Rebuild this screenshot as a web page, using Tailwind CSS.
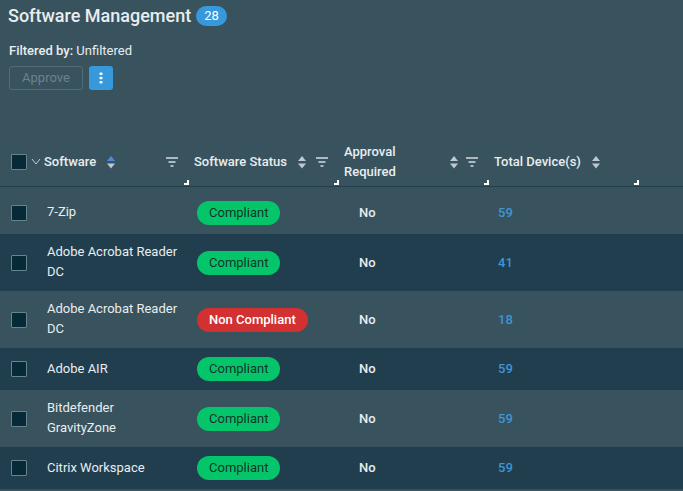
<!DOCTYPE html>
<html lang="en">
<head>
<meta charset="utf-8">
<meta name="viewport" content="width=device-width, initial-scale=1">
<title>Software Management</title>
<script src="https://cdn.jsdelivr.net/npm/@tailwindcss/browser@4"></script>
</head>
<body class="min-h-screen overflow-x-hidden overflow-y-hidden bg-[#38535e] font-[Roboto,sans-serif] text-[13px] leading-5 text-[#e8edef]">
<svg class="hidden" aria-hidden="true">
  <symbol id="sort" viewBox="0 0 8 14"><path class="fill-(--up)" d="M4 1 8 6H0Z"/><path fill="#bcc9d0" d="M0 8.500H8L4 13.500Z"/></symbol>
  <symbol id="filter" viewBox="0 0 12 10"><path fill="none" stroke="#d3dde1" stroke-width="1.500" d="M0 1h12M2.500 5h7M4.500 9h3"/></symbol>
</svg>
<header class="px-2 pt-1">
  <div class="flex items-center gap-[5px]">
    <h1 class="text-lg leading-6 font-medium">Software Management</h1>
    <span class="rounded-full bg-[#3798db] px-2 text-white">28</span>
  </div>
  <p class="mt-[13px] px-px"><span class="font-medium">Filtered by:</span> Unfiltered</p>
  <div class="mt-1 flex gap-1.5 px-px pt-px">
    <button type="button" disabled class="h-6 w-[74px] rounded-[3px] border border-[#536d78] text-[#6c828b]">Approve</button>
    <button type="button" aria-label="More actions" class="flex h-6 w-6 items-center justify-center rounded-[3px] bg-[#3798db]">
      <svg class="h-3 w-1" viewBox="0 0 4 12" fill="#fff"><rect x=".5" y=".5" width="3" height="2.500" rx=".8"/><rect x=".5" y="4.800" width="3" height="2.500" rx=".8"/><rect x=".5" y="9.100" width="3" height="2.500" rx=".8"/></svg>
    </button>
  </div>
</header>

<table class="mt-12 w-full table-fixed border-separate border-spacing-0 text-left">
  <colgroup><col class="w-[39px]"><col class="w-[150px]"><col class="w-[150px]"><col class="w-[150px]"><col class="w-[150px]"><col></colgroup>
  <thead>
    <tr class="h-[49px] [&>th]:relative [&>th]:border-b [&>th]:border-[#233f4d] [&>th]:p-0 [&>th]:font-medium">
      <th scope="col"><div class="flex items-center gap-1 pl-[11px]">
        <input type="checkbox" aria-label="Select all" class="h-4 w-4 shrink-0 appearance-none rounded-[1px] border border-[#66848c] bg-[#062a38] checked:bg-[#3798db]">
        <svg class="h-2 w-2.5 shrink-0" viewBox="0 0 10 8" fill="none" stroke="#c3ced3"><path d="M1 1 5 6 9 1"/></svg>
      </div></th>
      <th scope="col"><div class="flex items-center pr-[11px] pl-[5px]"><span>Software</span><svg class="ml-[11px] h-3.5 w-2 [--up:#4c8ce0]"><use href="#sort"/></svg><svg class="ml-auto h-2.5 w-3"><use href="#filter"/></svg></div><i class="absolute right-0 bottom-px h-[5px] w-[5px] border-r-2 border-b-2 border-white"></i></th>
      <th scope="col"><div class="flex items-center pr-[11px] pl-[5px]"><span>Software Status</span><svg class="ml-auto h-3.5 w-2 [--up:#bcc9d0]"><use href="#sort"/></svg><svg class="ml-2.5 h-2.5 w-3"><use href="#filter"/></svg></div><i class="absolute right-0 bottom-px h-[5px] w-[5px] border-r-2 border-b-2 border-white"></i></th>
      <th scope="col"><div class="flex items-center pr-[11px] pl-[5px]"><span>Approval<br>Required</span><svg class="ml-auto h-3.5 w-2 [--up:#bcc9d0]"><use href="#sort"/></svg><svg class="ml-2 h-2.5 w-3"><use href="#filter"/></svg></div><i class="absolute right-0 bottom-px h-[5px] w-[5px] border-r-2 border-b-2 border-white"></i></th>
      <th scope="col"><div class="flex items-center pr-[11px] pl-[5px]"><span>Total Device(s)</span><svg class="ml-[11px] h-3.5 w-2 [--up:#bcc9d0]"><use href="#sort"/></svg></div><i class="absolute right-0 bottom-px h-[5px] w-[5px] border-r-2 border-b-2 border-white"></i></th>
      <td class="border-b border-[#233f4d]"></td>
    </tr>
  </thead>
  <tbody id="rows" class="[&>tr:first-child>td]:pt-1"></tbody>
</table>

<template id="row">
  <tr class="h-[42px] first:h-[47px] even:bg-[#213e4e]">
    <td><input type="checkbox" class="ml-[11px] block h-4 w-4 appearance-none rounded-[1px] border border-[#66848c] bg-[#062a38] checked:bg-[#3798db]"></td>
    <td><div data-name class="pt-2 pr-1 pb-[9px] pl-2"></div></td>
    <td><div class="pl-2"><span data-status class="inline-flex h-6 items-center rounded-full px-3"></span></div></td>
    <td><div class="pl-5 font-medium">No</div></td>
    <td><div class="pl-[9px]"><a href="#devices" data-total class="font-medium text-[#3f94d6]"></a></div></td>
    <td></td>
  </tr>
</template>
<script>
  const rows = [
    ['7-Zip', true, 59],
    ['Adobe Acrobat Reader DC', true, 41],
    ['Adobe Acrobat Reader DC', false, 18],
    ['Adobe AIR', true, 59],
    ['Bitdefender GravityZone', true, 59],
    ['Citrix Workspace', true, 59]
  ];
  const good = 'bg-[#05c56b] text-[#123527]'.split(' ');
  const bad = 'bg-[#d33031] font-medium text-white'.split(' ');
  for (const [name, ok, total] of rows) {
    const r = document.getElementById('row').content.cloneNode(true);
    r.querySelector('input').setAttribute('aria-label', 'Select ' + name);
    r.querySelector('[data-name]').textContent = name;
    const s = r.querySelector('[data-status]');
    s.textContent = ok ? 'Compliant' : 'Non Compliant';
    s.classList.add(...(ok ? good : bad));
    r.querySelector('[data-total]').textContent = total;
    document.getElementById('rows').append(r);
  }
</script>
</body>
</html>
